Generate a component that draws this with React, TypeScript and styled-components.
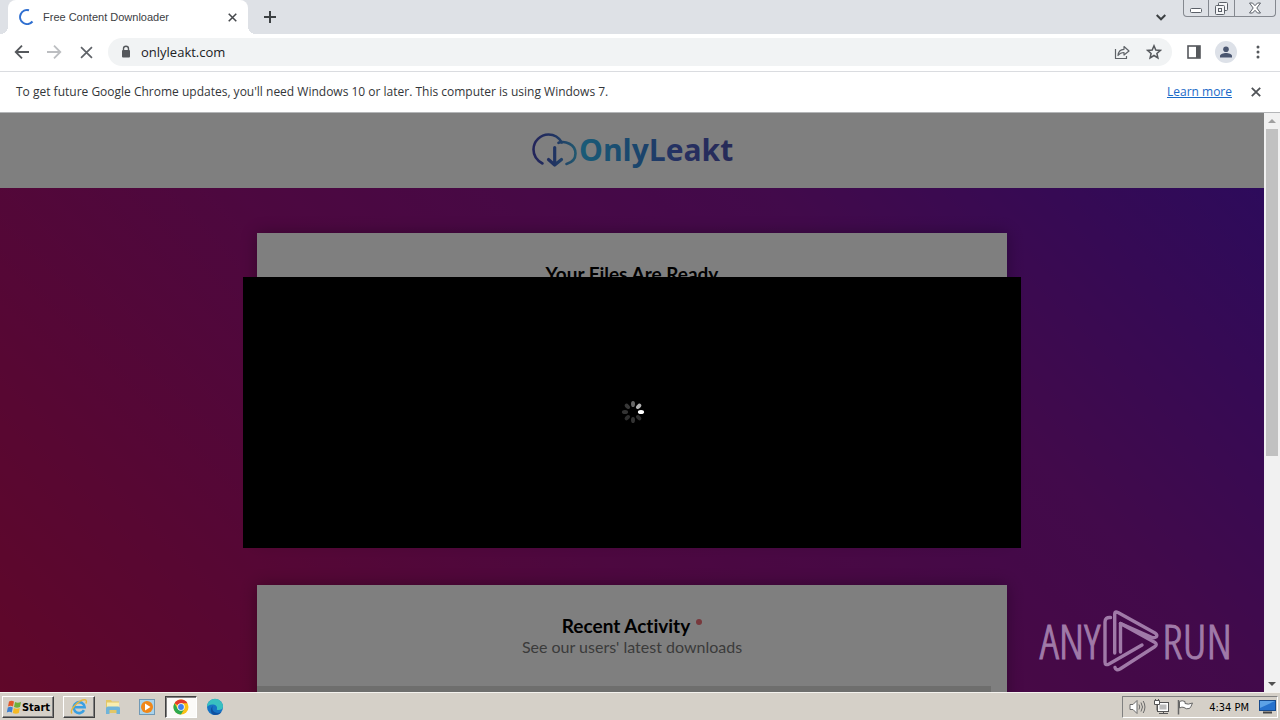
import React from "react";
import styled, { createGlobalStyle } from "styled-components";

const Global = createGlobalStyle`
  * { box-sizing: border-box; }
  body { margin: 0; font-family: "Noto Sans", "Open Sans", sans-serif; overflow: hidden; }
  button { font: inherit; color: inherit; border: 0; padding: 0; background: none; }
`;

const Desktop = styled.div`
  display: flex;
  flex-direction: column;
  height: 100vh;
  background: #fff;
`;

const TabStrip = styled.div`
  display: flex;
  height: 34px;
  flex: none;
  background: #dee1e6;
  padding-left: 8px;
`;

const Tab = styled.div`
  position: relative;
  display: flex;
  align-items: center;
  width: 240px;
  padding: 0 10px 0 11px;
  gap: 8px;
  background: #fff;
  border-radius: 8px 8px 0 0;
  font-family: "Liberation Sans", sans-serif;
  font-size: 11px;
  color: #3c4043;
  &::before, &::after {
    content: "";
    position: absolute;
    bottom: 0;
    width: 8px;
    height: 8px;
  }
  &::before { left: -8px; background: radial-gradient(circle at 0 0, #dee1e6 8px, #fff 8px); }
  &::after { right: -8px; background: radial-gradient(circle at 100% 0, #dee1e6 8px, #fff 8px); }
`;

const TabTitle = styled.span`
  flex: 1;
  white-space: nowrap;
`;

const IconButton = styled.button<{ $w?: number }>`
  display: flex;
  align-items: center;
  justify-content: center;
  flex: none;
  width: ${(p) => p.$w ?? 12}px;
`;

const NewTab = styled(IconButton)`
  margin-left: 8px;
`;

const TabSearch = styled(IconButton)`
  margin-left: auto;
`;

const WindowButtons = styled.div`
  display: flex;
  height: 17px;
  margin: 0 4px 0 16px;
  border: 1px solid #84888f;
  border-top: 0;
  border-radius: 0 0 4px 4px;
  overflow: hidden;
  button + button { border-left: 1px solid #84888f; }
`;

const Toolbar = styled.div`
  display: flex;
  align-items: center;
  flex: none;
  height: 38px;
  padding: 0 12px 1px;
  border-bottom: 1px solid #dadce0;
  background: #fff;
`;

const NavButtons = styled.div`
  display: flex;
  gap: 12px;
  margin-right: 12px;
`;

const AddressBar = styled.label`
  display: flex;
  align-items: center;
  flex: 1;
  height: 28px;
  border-radius: 14px;
  background: #f1f3f4;
  padding: 0 8px 0 12px;
  gap: 9px;
`;

const AddressInput = styled.input`
  flex: 1;
  min-width: 0;
  border: 0;
  padding: 0;
  outline: 0;
  background: transparent;
  font: 13px "Open Sans", sans-serif;
  color: #202124;
`;

const AddressActions = styled.div`
  display: flex;
  gap: 12px;
`;

const ToolbarActions = styled.div`
  display: flex;
  align-items: center;
  margin-left: 12px;
  gap: 11px;
`;

const Avatar = styled.button`
  display: flex;
  align-items: center;
  justify-content: center;
  width: 22px;
  height: 22px;
  border-radius: 50%;
  background: #dde1e8;
`;

const InfoBar = styled.div`
  display: flex;
  align-items: center;
  flex: none;
  height: 41px;
  padding: 0 18px 1px 16px;
  border-bottom: 1px solid #b4b6b8;
  background: #fff;
  font-family: "Open Sans", sans-serif;
  font-size: 12px;
  color: #333639;
  a { margin-left: auto; margin-right: 18px; color: #1a6ac8; }
`;

const Viewport = styled.div`
  display: flex;
  flex: 1;
  min-height: 0;
`;

const Page = styled.div`
  position: relative;
  flex: 1;
  overflow: hidden;
  display: flex;
  flex-direction: column;
  font-family: Lato, sans-serif;
  font-variant-ligatures: none;
  background: linear-gradient(45deg, #c00e52, #9a1080 40%, #841496 69%, #5416bc);
`;

const SiteHeader = styled.header`
  display: flex;
  justify-content: center;
  align-items: center;
  flex: none;
  height: 75px;
  background: #fff;
`;

const Main = styled.main`
  display: flex;
  flex-direction: column;
  align-items: center;
  gap: 45px;
  padding-top: 45px;
`;

const Card = styled.section`
  display: flex;
  flex-direction: column;
  flex: none;
  width: 100%;
  max-width: 750px;
  min-height: 307px;
  padding: 29px 0;
  text-align: center;
  background: #fff;
  box-shadow: 0 0 15px rgba(0, 0, 0, 0.3);
`;

const CardTitle = styled.h2`
  margin: 0;
  font-size: 19px;
  line-height: 24px;
  font-weight: 700;
  color: #000;
`;

const LiveDot = styled.i`
  display: inline-block;
  width: 6px;
  height: 6px;
  margin-left: 6px;
  border-radius: 50%;
  vertical-align: 8px;
  background: #f07078;
`;

const CardText = styled.p`
  margin: 0;
  font-size: 16px;
  line-height: 18px;
  color: #777;
`;

const ActivityList = styled.div`
  height: 60px;
  margin: 30px 16px 0 0;
  background: #dcdcda;
`;

const Overlay = styled.div`
  position: absolute;
  inset: 0;
  display: flex;
  justify-content: center;
  align-items: flex-start;
  padding-top: 164px;
  background: rgba(0, 0, 0, 0.5);
`;

const Dialog = styled.div`
  display: flex;
  justify-content: center;
  align-items: center;
  width: 778px;
  height: 271px;
  padding: 0 0 2px 2px;
  background: #000;
`;

const Watermark = styled.div`
  position: absolute;
  right: 32px;
  bottom: 20px;
  display: flex;
  align-items: center;
  gap: 3px;
  font-family: "Open Sans Condensed Light", "Open Sans Condensed", "Liberation Sans Narrow", sans-serif;
  font-weight: 300;
  font-size: 48px;
  line-height: 58px;
  color: #a07aa8;
  -webkit-text-stroke: 1px #a07aa8;
`;

const ScrollBar = styled.div`
  display: flex;
  flex-direction: column;
  align-items: center;
  flex: none;
  width: 16px;
  background: #f1f1f1;
`;

const ScrollThumb = styled.div`
  width: 12px;
  flex: 0 0 56.5%;
  margin-bottom: auto;
  background: #c1c1c1;
`;

const ScrollArrow = styled.button`
  display: flex;
  align-items: center;
  justify-content: center;
  height: 16px;
  width: 16px;
`;

const Taskbar = styled.footer`
  display: flex;
  align-items: center;
  flex: none;
  height: 28px;
  padding: 1px 2px 0;
  background: #d5d0c8;
  border-top: 1px solid #f4f2ee;
  font-family: "DejaVu Sans Condensed", "DejaVu Sans", sans-serif;
  font-size: 11px;
`;

const TaskButton = styled.button<{ $look?: "raised" | "pressed" }>`
  display: flex;
  align-items: center;
  justify-content: center;
  width: 32px;
  height: 22px;
  margin-right: 2px;
  border: 1px solid transparent;
  ${(p) => p.$look === "raised" && `
    border-color: #fff #404040 #404040 #fff;
    box-shadow: inset -1px -1px #808080;`}
  ${(p) => p.$look === "pressed" && `
    border-color: #404040 #fff #fff #404040;
    box-shadow: inset 1px 1px #808080;
    background: #fbfaf8;`}
`;

const StartButton = styled(TaskButton)`
  width: 52px;
  margin-right: 9px;
  font-family: "DejaVu Sans Condensed", "DejaVu Sans", sans-serif;
  font-weight: 700;
  font-size: 11px;
`;

const Tray = styled.div`
  display: flex;
  align-items: center;
  height: 22px;
  margin-left: auto;
  padding: 0 1px 0 6px;
  gap: 7px;
  border: 1px solid;
  border-color: #808080 #fff #fff #808080;
`;

const Clock = styled.time`
  margin: 0 3px 0 8px;
`;

const Cross = ({ size, color = "#45484c", w = 1.7 }: { size: number; color?: string; w?: number }) => (
  <svg width={size} height={size} viewBox="0 0 10 10" fill="none" stroke={color} strokeWidth={w}>
    <path d="M.8.8l8.4 8.4M9.2.8L.8 9.2" />
  </svg>
);

const Arrow = ({ color, flip }: { color: string; flip?: boolean }) => (
  <svg width="20" height="20" viewBox="0 0 20 20" fill="none" stroke={color} strokeWidth="1.8">
    <path d={flip ? "M3 10h13M10 3.7l6.3 6.3-6.3 6.3" : "M17 10H4M10 3.7L3.7 10l6.3 6.3"} />
  </svg>
);

const Logo = () => (
  <svg width="204" height="42" viewBox="0 0 204 42" role="img" aria-label="OnlyLeakt">
    <defs>
      <linearGradient id="cloud" gradientUnits="userSpaceOnUse" x1="0" x2="45" y1="0" y2="0"><stop stopColor="#4848b4" /><stop offset=".5" stopColor="#4068c4" /><stop offset="1" stopColor="#44b4e0" /></linearGradient>
      <linearGradient id="word" gradientUnits="userSpaceOnUse" x1="48" x2="200" y1="0" y2="0"><stop stopColor="#34b8f0" /><stop offset=".4" stopColor="#3488d8" /><stop offset=".65" stopColor="#4c60c4" /><stop offset="1" stopColor="#4c54b0" /></linearGradient>
    </defs>
    <g transform="translate(2 0)">
      <g fill="none" stroke="url(#cloud)" strokeWidth="2.6" strokeLinecap="round" strokeLinejoin="round">
        <path d="M10.500 33.500C5 30.500 1.500 25.500 1.500 19.500C1.500 11 8.500 4.500 16.500 4.500C22 4.500 27 7.500 29.800 12.500" />
        <path d="M26.500 12.800C33 10.500 43.500 14 43.500 23.500C43.500 29 40 32.500 34.500 34" />
        <path d="M22.700 17.500V34.500M16.500 29.500L22.700 35L29.500 29.500" strokeWidth="3.200" />
      </g>
      <text x="47" y="31" fontFamily="Open Sans, sans-serif" fontWeight="700" fontSize="30" fill="url(#word)">OnlyLeakt</text>
    </g>
  </svg>
);

const petals = [1, 0.18, 0.2, 0.18, 0.2, 0.22, 0.4, 0.7];
const Spinner = () => (
  <svg width="24" height="24" viewBox="-12 -12 24 24">
    {petals.map((o, i) => (
      <ellipse key={i} cx="8" cy="0" rx="3.100" ry="2" fill="#fff" opacity={o} transform={`rotate(${i * 45})`} />
    ))}
  </svg>
);

const PlayMark = () => (
  <svg width="56" height="62" viewBox="0 0 56 62" fill="none" stroke="#a07aa8" strokeWidth="3.4" strokeLinejoin="round" strokeLinecap="round">
    <path d="M7.500 7.500Q2 7 2 12V52Q2 56 6 54L39 35" />
    <path d="M11.700 43V4Q11.700 1 15 2.500L52 23Q55 25 53 27Q51 28.500 48 27L17.500 13.500V42" />
    <path d="M17.500 13.500L52 32.500Q54.500 34.500 52 36.500L17 59Q13 61 12 57.500" />
  </svg>
);

export default function App() {
  return (
    <Desktop>
      <Global />
      <TabStrip>
        <Tab>
          <svg width="16" height="16" viewBox="0 0 16 16" fill="none" stroke="#2f6fd0" strokeWidth="2"><path d="M10 1.300A7 7 0 1 0 13.500 12.500" /></svg>
          <TabTitle>Free Content Downloader</TabTitle>
          <IconButton aria-label="Close tab"><Cross size={9} /></IconButton>
        </Tab>
        <NewTab $w={28} aria-label="New tab">
          <svg width="12" height="12" viewBox="0 0 12 12" stroke="#3c4043" strokeWidth="2"><path d="M6 0v12M0 6h12" /></svg>
        </NewTab>
        <TabSearch aria-label="Search tabs">
          <svg width="10" height="7" viewBox="0 0 10 7" fill="none" stroke="#3c4043" strokeWidth="2"><path d="M.7 1L5 5.300L9.300 1" /></svg>
        </TabSearch>
        <WindowButtons>
          <IconButton $w={24} aria-label="Minimize">
            <svg width="12" height="14" viewBox="0 0 12 14"><rect x=".5" y="7.500" width="11" height="4" rx="1" fill="#fff" stroke="#5b6068" /></svg>
          </IconButton>
          <IconButton $w={26} aria-label="Restore">
            <svg width="13" height="13" viewBox="0 0 13 13" fill="#f4f5f7" stroke="#5b6068"><rect x="3.500" y=".5" width="9" height="8" rx="1" /><rect x=".5" y="3.500" width="9" height="9" rx="1" /><rect x="3.500" y="6.500" width="3" height="3" /></svg>
          </IconButton>
          <IconButton $w={41} aria-label="Close">
            <svg width="12" height="12" viewBox="0 0 12 12" fill="#fff" stroke="#5b6068"><path d="M.5 1h3L6 3.700L8.500 1h3L7.800 6l3.700 5h-3L6 8.300L3.500 11h-3L4.200 6z" /></svg>
          </IconButton>
        </WindowButtons>
      </TabStrip>
      <Toolbar>
        <NavButtons>
          <IconButton $w={20} aria-label="Back"><Arrow color="#55585c" /></IconButton>
          <IconButton $w={20} aria-label="Forward"><Arrow color="#bcbec1" flip /></IconButton>
          <IconButton $w={20} aria-label="Stop"><Cross size={13} color="#5f6368" w={1.300} /></IconButton>
        </NavButtons>
        <AddressBar>
          <svg width="12" height="14" viewBox="0 0 12 14"><rect x="2" y="5" width="8" height="7.500" rx="1" fill="#55585c" /><path d="M3.500 5.500V3.800a2.500 2.500 0 0 1 5 0V5.500" fill="none" stroke="#55585c" strokeWidth="1.400" /></svg>
          <AddressInput aria-label="Address" defaultValue="onlyleakt.com" />
          <AddressActions>
            <IconButton $w={20} aria-label="Share">
              <svg width="16" height="16" viewBox="0 0 16 16" fill="none" stroke="#5f6368" strokeWidth="1.200" strokeLinejoin="round"><path d="M1.500 5V14.500H12.500V12" /><path d="M4 11.500C4.300 7.500 6.500 5.500 10 5.300V2.500L15 7L10 11V8.500C7.500 8.500 5.500 9.500 4 11.500Z" /></svg>
            </IconButton>
            <IconButton $w={20} aria-label="Bookmark">
              <svg width="16" height="16" viewBox="0 0 16 16" fill="none" stroke="#55585c" strokeWidth="1.500"><path d="M8 1.800L9.800 6L14.300 6.400L10.900 9.400L11.900 13.900L8 11.500L4.100 13.900L5.100 9.400L1.700 6.400L6.200 6Z" /></svg>
            </IconButton>
          </AddressActions>
        </AddressBar>
        <ToolbarActions>
          <IconButton $w={20} aria-label="Side panel">
            <svg width="14" height="14" viewBox="0 0 14 14"><rect x="1" y="1" width="12" height="12" fill="none" stroke="#55585c" strokeWidth="1.600" /><rect x="9" y="1" width="4" height="12" fill="#55585c" /></svg>
          </IconButton>
          <Avatar aria-label="Profile">
            <svg width="14" height="14" viewBox="0 0 14 14" fill="#4a5670"><circle cx="7" cy="4.200" r="2.800" /><path d="M1 12.500V11C1 9 4.500 8 7 8s6 1 6 3v1.500z" /></svg>
          </Avatar>
          <IconButton $w={20} aria-label="Menu">
            <svg width="4" height="14" viewBox="0 0 4 14" fill="#55585c"><circle cx="2" cy="2" r="1.500" /><circle cx="2" cy="7" r="1.500" /><circle cx="2" cy="12" r="1.500" /></svg>
          </IconButton>
        </ToolbarActions>
      </Toolbar>
      <InfoBar>
        <span>To get future Google Chrome updates, you'll need Windows 10 or later. This computer is using Windows 7.</span>
        <a href="#learn">Learn more</a>
        <IconButton aria-label="Dismiss"><Cross size={10} color="#505357" w={1.800} /></IconButton>
      </InfoBar>
      <Viewport>
        <Page>
          <SiteHeader><Logo /></SiteHeader>
          <Main>
            <Card><CardTitle>Your Files Are Ready</CardTitle></Card>
            <Card>
              <CardTitle>Recent Activity<LiveDot /></CardTitle>
              <CardText>See our users' latest downloads</CardText>
              <ActivityList />
            </Card>
          </Main>
          <Overlay><Dialog role="dialog" aria-label="Loading"><Spinner /></Dialog></Overlay>
          <Watermark><span>ANY</span><PlayMark /><span>RUN</span></Watermark>
        </Page>
        <ScrollBar>
          <ScrollArrow aria-label="Scroll up"><svg width="8" height="4" viewBox="0 0 8 4" fill="#a0a0a0"><path d="M0 4L4 0L8 4z" /></svg></ScrollArrow>
          <ScrollThumb />
          <ScrollArrow aria-label="Scroll down"><svg width="8" height="4" viewBox="0 0 8 4" fill="#505050"><path d="M0 0L4 4L8 0z" /></svg></ScrollArrow>
        </ScrollBar>
      </Viewport>
      <Taskbar>
        <StartButton $look="raised">
          <svg width="16" height="16" viewBox="0 0 16 16"><path d="M3 2.500Q5.500 1 8 2.500L7 7.500Q4.500 6 2 7.500z" fill="#e2592a" /><path d="M9 3Q11.500 4.500 15 3L14 8Q11 9.500 8 8z" fill="#6fb03a" /><path d="M1.800 8.500Q4.500 7 6.800 8.500L5.800 13.500Q3.500 12 .8 13.500z" fill="#3c7fd0" /><path d="M7.800 9Q10.500 10.500 13.800 9L12.800 14Q10 15.500 6.800 14z" fill="#f5b924" /></svg>
          Start
        </StartButton>
        <TaskButton $look="raised" aria-label="Internet Explorer">
          <svg width="18" height="18" viewBox="0 0 18 18" fill="none"><path d="M14 12.200A5.500 5.500 0 1 1 14.600 9.200H5" stroke="#3ba0e2" strokeWidth="2.600" /><path d="M2 15.500C-1 12 9 1.500 15 1.800C17 2 16.500 4.500 15.800 5.500" stroke="#e8b63c" strokeWidth="1.400" /></svg>
        </TaskButton>
        <TaskButton aria-label="Explorer">
          <svg width="18" height="18" viewBox="0 0 18 18"><path d="M2 2h5l1 1.500h7V15H2z" fill="#e3c766" /><path d="M3 4.500h12v5H3z" fill="#f8edb0" /><path d="M2 16V10.500Q2 8.500 4 8.500h10q2 0 2 2V16h-3.500v-4h-7v4z" fill="#6fb4da" /></svg>
        </TaskButton>
        <TaskButton aria-label="Media Player">
          <svg width="16" height="16" viewBox="0 0 16 16"><rect x=".5" y=".5" width="15" height="15" fill="#a9d3ec" stroke="#7199b5" /><circle cx="8" cy="8" r="6" fill="#f08719" /><path d="M6 4.500L11.500 8L6 11.500z" fill="#fff" /></svg>
        </TaskButton>
        <TaskButton $look="pressed" aria-label="Chrome">
          <svg width="16" height="16" viewBox="0 0 16 16"><circle cx="8" cy="8" r="7.500" fill="#fbc116" /><path d="M8 8L1.500 4.250A7.500 7.500 0 0 1 14.500 4.250H8z" fill="#e33b2e" /><path d="M1.500 4.250A7.500 7.500 0 0 0 8 15.500L11.200 9.900L8 8L4.800 9.900z" fill="#2da94f" /><circle cx="8" cy="8" r="3.700" fill="#fff" /><circle cx="8" cy="8" r="2.900" fill="#4080ee" /></svg>
        </TaskButton>
        <TaskButton aria-label="Edge">
          <svg width="18" height="18" viewBox="0 0 18 18"><circle cx="9" cy="9" r="8" fill="#1673c4" /><path d="M1 9A8 8 0 0 1 17 8.500C17 11 15 12 12.500 12C11 12 10.500 11.500 11 10.500C11.500 8 9 6.500 6.500 6.500C3.500 6.500 1.500 8 1 9z" fill="#38c0c0" /><path d="M7 8C5 11 7.500 15 12 15C14 15 15 14 16 13C14.500 16 12 17 9 17C4.500 17 3.500 10 7 8z" fill="#1050a0" /></svg>
        </TaskButton>
        <Tray>
          <svg width="17" height="16" viewBox="0 0 17 16" fill="none" stroke="#6a6a6a"><path d="M1 5.500h3L8 1.500v13L4 10.500H1z" fill="#fff" /><path d="M10 5.500q1.500 2.500 0 5M12 3.500q3 4.500 0 9M14.200 2q3.500 6 0 12" /></svg>
          <svg width="17" height="16" viewBox="0 0 17 16" stroke="#555"><rect x="4.500" y="3.500" width="11" height="9" fill="#fff" /><rect x="6.500" y="5.500" width="7" height="5" fill="#bbb" stroke="none" /><path d="M6 14.500h9M10.500 12.500v2" /><path d="M1.500 1.500h5v4h-5zM2.500 0v1.500M5.500 0v1.500M4 5.500v6" fill="#fff" /></svg>
          <svg width="17" height="16" viewBox="0 0 17 16" fill="#fff" stroke="#666"><path d="M1.500 1v14.500" strokeWidth="1.500" /><path d="M2.500 2.500Q5 1 8 2.500V4.500Q11 6 15.500 4Q14 8 12.500 9.500Q9 10.500 7 8.500Q5 7.500 2.500 9z" /></svg>
          <Clock>4:34 PM</Clock>
          <svg width="17" height="16" viewBox="0 0 17 16"><rect x=".5" y="1.500" width="16" height="10" fill="#2672cd" stroke="#174a8c" /><path d="M1 2h15L1 9z" fill="#5ca2e6" /><path d="M4 13.500h9" stroke="#444" strokeWidth="2" /></svg>
        </Tray>
      </Taskbar>
    </Desktop>
  );
}
